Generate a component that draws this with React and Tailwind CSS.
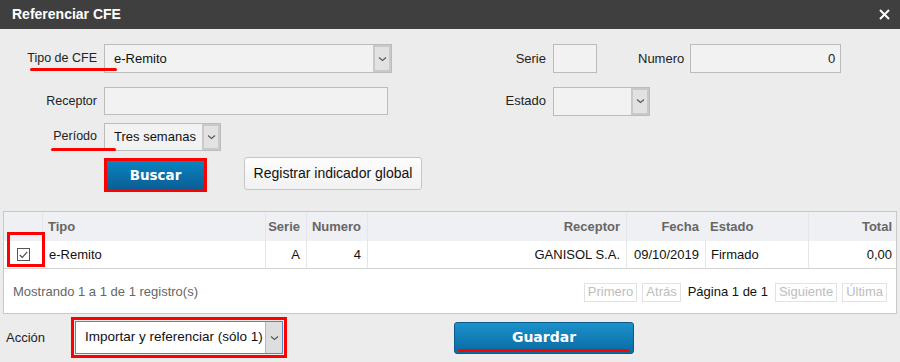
import { useState } from 'react';

const Arrow = () => (
    <svg width="9" height="6" viewBox="0 0 9 6" fill="none">
        <path d="M1 1.5L4.5 4.5L8 1.5" stroke="#555" strokeWidth="1.1" />
    </svg>
);

const SelectBox = ({ value, width }) => (
    <div className="flex h-full items-stretch bg-[#f2f2f2] border border-[#bcbcbc]" style={{ width }}>
        <div className="flex-1 flex items-center pl-[9px] text-[13px] text-[#111] whitespace-nowrap">{value}</div>
        <div className="w-[18px] flex items-center justify-center bg-[#e2e2e2] border-2 border-[#c9c9c9]">
            <Arrow />
        </div>
    </div>
);

const PageBtn = ({ children }) => (
    <span className="px-[3px] h-[19px] flex items-center border border-[#e2e2e2] text-[#bdbdbd]">{children}</span>
);

const App = () => {
    const [checked, setChecked] = useState(true);

    return (
        <div className="w-[900px] h-[362px] bg-[#ececec] overflow-hidden text-[13px] text-[#222]" style={{ fontFamily: '"Liberation Sans", Arial, sans-serif' }}>
            {/* title bar */}
            <div className="h-[29px] bg-[#3f3f3f] flex items-center justify-between pl-[12px] pr-[10px]">
                <span className="text-white font-bold text-[14px]">Referenciar CFE</span>
                <svg width="11" height="11" viewBox="0 0 11 11">
                    <path d="M1 1L10 10M10 1L1 10" stroke="#fff" strokeWidth="2" />
                </svg>
            </div>

            {/* filters */}
            <div className="pt-[15px]">
                <div className="flex items-center h-[29px]">
                    <div className="relative w-[97px] text-right text-[12.5px]">
                        Tipo de CFE
                        <div className="absolute left-[30px] top-[19px] w-[87px] h-[3px] bg-[#f00] rounded-full z-10" />
                    </div>
                    <div className="ml-[7px] h-full">
                        <SelectBox value="e-Remito" width={288} />
                    </div>
                    <div className="w-[154px] text-right">Serie</div>
                    <div className="ml-[7px] w-[44px] h-full bg-[#f2f2f2] border border-[#bcbcbc]" />
                    <div className="ml-[41px]">Numero</div>
                    <div className="ml-[6px] w-[151px] h-full bg-[#f2f2f2] border border-[#bcbcbc] flex items-center justify-end pr-[5px]">0</div>
                </div>

                <div className="flex items-center h-[28px] mt-[14px]">
                    <div className="w-[97px] text-right text-[12.5px]">Receptor</div>
                    <div className="ml-[7px] w-[284px] h-full bg-[#f2f2f2] border border-[#bcbcbc]" />
                    <div className="w-[158px] text-right">Estado</div>
                    <div className="ml-[7px] h-[29px]">
                        <SelectBox value="" width={97} />
                    </div>
                </div>

                <div className="flex items-center h-[28px] mt-[8px]">
                    <div className="relative w-[97px] text-right text-[12.5px] -mt-[2px]">
                        Período
                        <div className="absolute left-[51px] top-[21px] w-[65px] h-[3px] bg-[#f00] rounded-full z-10" />
                    </div>
                    <div className="ml-[7px] h-full">
                        <SelectBox value="Tres semanas" width={117} />
                    </div>
                </div>

                <div className="flex items-start mt-[7px] pl-[104px]">
                    <div className="w-[103px] h-[34px] border-[3px] border-[#f00] flex">
                        <button className="flex-1 bg-gradient-to-b from-[#0a84c3] to-[#0b5f94] text-white font-bold text-[13.5px]" style={{ fontFamily: '"DejaVu Sans", Verdana, sans-serif' }}>
                            Buscar
                        </button>
                    </div>
                    <button className="ml-[37px] -mt-[1px] w-[178px] h-[33px] rounded-[3px] border border-[#c6c6c6] bg-gradient-to-b from-[#fdfdfd] to-[#f1f1f1] text-[14px] text-[#111]">
                        Registrar indicador global
                    </button>
                </div>
            </div>

            {/* table */}
            <div className="relative mt-[19px] ml-[3px] w-[894px] border border-[#c8c8c8] bg-white">
                <div className="grid grid-cols-[39px_222px_41px_61px_259px_79px_103px_88px] h-[29px] bg-[#eef0f3] font-bold text-[#666] items-stretch">
                    <div className="border-r border-[#e4e6ea]" />
                    <div className="flex items-center pl-[5px]">Tipo</div>
                    <div className="flex items-center justify-end pr-[6px] border-l border-[#e4e6ea]">Serie</div>
                    <div className="flex items-center justify-end pr-[6px] border-l border-[#e4e6ea]">Numero</div>
                    <div className="flex items-center justify-end pr-[6px] border-l border-[#e4e6ea]">Receptor</div>
                    <div className="flex items-center justify-end pr-[6px] border-l border-[#e4e6ea]">Fecha</div>
                    <div className="flex items-center pl-[5px]">Estado</div>
                    <div className="flex items-center justify-end pr-[4px] border-l border-[#e4e6ea]">Total</div>
                </div>
                <div className="grid grid-cols-[39px_222px_41px_61px_259px_79px_103px_88px] h-[28px] border-b border-[#d4d4d4] text-[#111] items-stretch">
                    <div className="flex items-center justify-center">
                        <button
                            onClick={() => setChecked(!checked)}
                            className="w-[13px] h-[13px] border border-[#555] bg-white flex items-center justify-center"
                        >
                            {checked && (
                                <svg width="9" height="8" viewBox="0 0 9 8">
                                    <path d="M0.8 4L3.3 6.5L8.2 0.8" stroke="#444" strokeWidth="1.1" fill="none" />
                                </svg>
                            )}
                        </button>
                    </div>
                    <div className="flex items-center pl-[5px] border-l border-[#e6e6e6]">e-Remito</div>
                    <div className="flex items-center justify-end pr-[6px] border-l border-[#e6e6e6]">A</div>
                    <div className="flex items-center justify-end pr-[6px] border-l border-[#e6e6e6]">4</div>
                    <div className="flex items-center justify-end pr-[6px] border-l border-[#e6e6e6]">GANISOL S.A.</div>
                    <div className="flex items-center justify-end pr-[6px] border-l border-[#e6e6e6]">09/10/2019</div>
                    <div className="flex items-center pl-[5px] border-l border-[#e6e6e6]">Firmado</div>
                    <div className="flex items-center justify-end pr-[4px] border-l border-[#e6e6e6]">0,00</div>
                </div>
                <div className="h-[44px] flex items-center justify-between pl-[9px] pr-[9px] pt-[2px]">
                    <span className="text-[#666]">Mostrando 1 a 1 de 1 registro(s)</span>
                    <div className="flex items-center gap-[5px]">
                        <PageBtn>Primero</PageBtn>
                        <PageBtn>Atrás</PageBtn>
                        <span className="px-[2px] text-[#111]">Página 1 de 1</span>
                        <PageBtn>Siguiente</PageBtn>
                        <PageBtn>Última</PageBtn>
                    </div>
                </div>
                <div className="absolute left-[3px] top-[20px] w-[38px] h-[35px] border-[3px] border-[#f00]" />
            </div>

            {/* bottom actions */}
            <div className="flex items-center mt-[3px]">
                <span className="ml-[6px] w-[65px]">Acción</span>
                <div className="w-[216px] h-[41px] border-[3px] border-[#f00] p-[1px]">
                    <div className="flex h-full bg-white border border-[#4a8ac6]">
                        <div className="flex-1 flex items-center pl-[9px] text-[13.5px] text-[#111] whitespace-nowrap overflow-hidden">Importar y referenciar (sólo 1)</div>
                        <div className="w-[17px] flex items-center justify-center bg-[#dedede] border-l border-[#b8b8b8]">
                            <Arrow />
                        </div>
                    </div>
                </div>
                <button className="relative ml-[167px] w-[180px] h-[32px] rounded-[3px] border border-[#0b5a8a] bg-gradient-to-b from-[#1a92cc] to-[#0a6aa1] text-white font-bold text-[14px]" style={{ fontFamily: '"DejaVu Sans", Verdana, sans-serif' }}>
                    Guardar
                    <span className="absolute left-[3px] right-[4px] bottom-[1px] h-[3px] bg-[#f00] rounded-full" />
                </button>
            </div>
        </div>
    );
};

export default App;
